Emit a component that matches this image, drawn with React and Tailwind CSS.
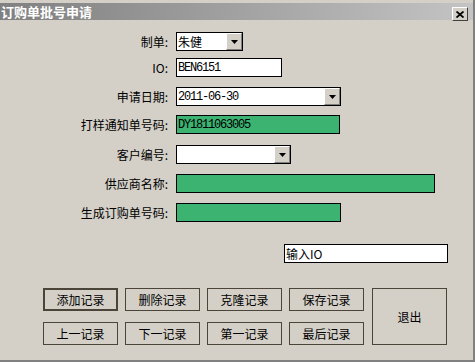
const rows = [
  { label: "制单:", kind: "select", value: "朱健", width: "w-[67px]", mt: "mt-[12px]" },
  { label: "IO:", kind: "text", value: "BEN6151", width: "w-[106px]", mt: "mt-[7px]" },
  { label: "申请日期:", kind: "select", value: "2011-06-30", width: "w-[165px]", mt: "mt-[10px]" },
  { label: "打样通知单号码:", kind: "green", value: "DY1811063005", width: "w-[164px]", mt: "mt-[9px]" },
  { label: "客户编号:", kind: "select", value: "", width: "w-[115px]", mt: "mt-[11px]" },
  { label: "供应商名称:", kind: "green", value: "", width: "w-[259px]", mt: "mt-[10px]" },
  { label: "生成订购单号码:", kind: "green", value: "", width: "w-[165px]", mt: "mt-[10px]" },
];

const cjk = { fontFamily: '"Noto Sans CJK SC", "Liberation Sans", sans-serif' };
const mono = { fontFamily: '"Liberation Mono", "Noto Sans CJK SC", monospace' };

const Arrow = () => (
  <div className="w-[16px] h-full bg-[#d4d0c8] border border-t-white border-l-white border-r-[#808080] border-b-[#808080] flex items-center justify-center">
    <svg width="7" height="4" viewBox="0 0 7 4">
      <path d="M0 0h7L3.5 4z" fill="#000" />
    </svg>
  </div>
);

const Field = ({ row }) => {
  const base = `${row.width} h-[19px] border border-black flex items-center`;
  if (row.kind === "green") {
    return (
      <div className={`${base} bg-[#3cb371] pl-[1px]`}>
        <span className="text-[12px] tracking-[-1.2px] text-black leading-none" style={mono}>{row.value}</span>
      </div>
    );
  }
  const isCjk = /[\u4e00-\u9fff]/.test(row.value);
  return (
    <div className={`${base} bg-white`}>
      <span
        className={`flex-1 pl-[1px] leading-none text-black ${isCjk ? "text-[12px]" : "text-[12px] tracking-[-1.2px]"}`}
        style={isCjk ? cjk : mono}
      >
        {row.value}
      </span>
      {row.kind === "select" && <Arrow />}
    </div>
  );
};

const Btn = ({ children, main, tall }) => (
  <button
    className={`w-[75px] ${tall ? "h-[57px]" : "h-[23px]"} bg-[#d4d0c8] text-[12px] text-black flex items-center justify-center ${
      main ? "border-2 border-[#4a4538]" : "border border-[#4a4538]"
    }`}
    style={cjk}
  >
    {children}
  </button>
);

export default function App() {
  return (
    <div className="w-[475px] h-[362px] bg-[#d4d0c8] flex flex-col border-r-2 border-r-[#808080] border-b-2 border-b-[#808080] overflow-hidden" style={cjk}>
      <div className="mt-[3px] h-[17px] flex items-center bg-gradient-to-r from-[#808080] to-[#c4c4c4] pr-[5px]">
        <span className="flex-1 pl-[1px] text-[13px] font-bold text-white leading-none">订购单批号申请</span>
        <div className="w-[16px] h-[14px] mt-[5px] bg-[#d4d0c8] border border-t-white border-l-white border-r-[#404040] border-b-[#404040] flex items-center justify-center">
          <svg width="8" height="7" viewBox="0 0 8 7">
            <path d="M0.5 0.5L7.5 6.5M7.5 0.5L0.5 6.5" stroke="#000" strokeWidth="1.8" />
          </svg>
        </div>
      </div>

      <div className="flex flex-col">
        {rows.map((row) => (
          <div key={row.label} className={`flex items-center ${row.mt}`}>
            <div className="w-[170px] text-right text-[12px] text-black leading-none pr-[2px]">{row.label}</div>
            <div className="ml-[6px]">
              <Field row={row} />
            </div>
          </div>
        ))}
      </div>

      <div className="mt-[22px] ml-[284px] w-[164px] h-[19px] bg-white border border-black flex items-center pl-[1px]">
        <span className="text-[12px] text-black leading-none">输入IO</span>
      </div>

      <div className="mt-[25px] ml-[43px] flex gap-[8px]">
        <div className="grid grid-cols-4 gap-x-[7px] gap-y-[11px]">
          <Btn main>添加记录</Btn>
          <Btn>删除记录</Btn>
          <Btn>克隆记录</Btn>
          <Btn>保存记录</Btn>
          <Btn>上一记录</Btn>
          <Btn>下一记录</Btn>
          <Btn>第一记录</Btn>
          <Btn>最后记录</Btn>
        </div>
        <Btn tall>退出</Btn>
      </div>
    </div>
  );
}
